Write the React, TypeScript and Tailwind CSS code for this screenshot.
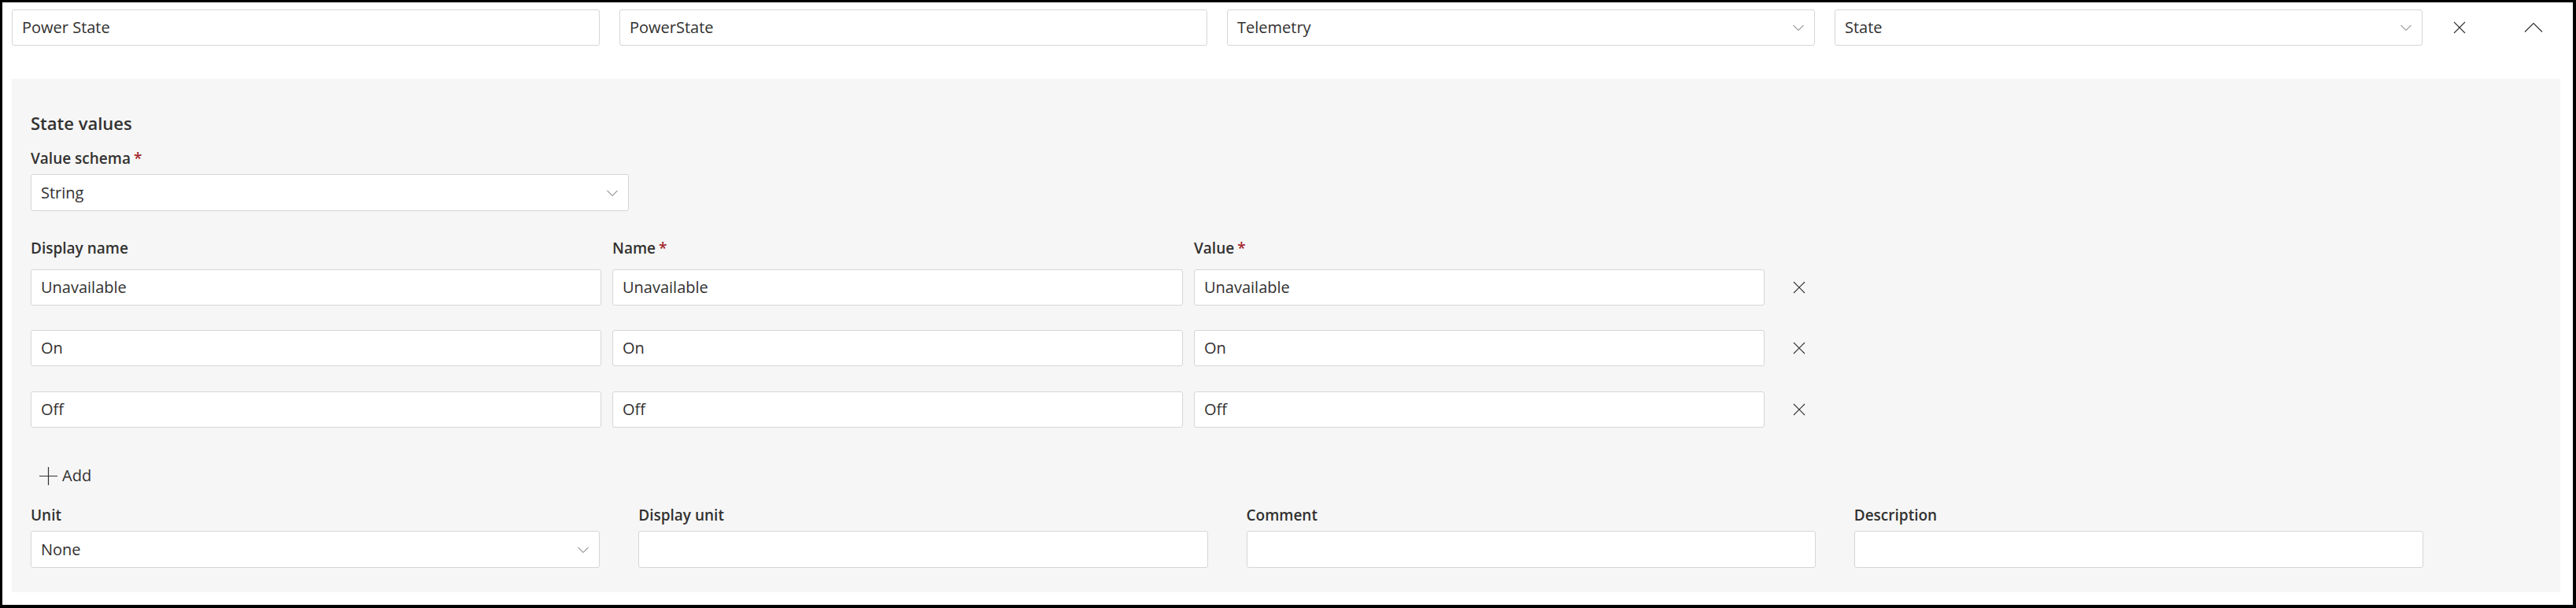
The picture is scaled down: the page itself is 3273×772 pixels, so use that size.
import React from "react";

type FieldProps = {
  value?: string;
  select?: boolean;
  className?: string;
};

function Chevron({ up }: { up?: boolean }) {
  return (
    <svg width="16" height="16" viewBox="0 0 16 16" fill="none" className="shrink-0">
      <path
        d={up ? "M1.5 11 L8 4.5 L14.5 11" : "M1.5 5 L8 11.5 L14.5 5"}
        stroke="#605e5c"
        strokeWidth="1"
      />
    </svg>
  );
}

function Cross({ size = 16 }: { size?: number }) {
  return (
    <svg width={size} height={size} viewBox="0 0 16 16" fill="none">
      <path d="M1 1 L15 15 M15 1 L1 15" stroke="#323130" strokeWidth="1.1" />
    </svg>
  );
}

function Field({ value, select, className }: FieldProps) {
  return (
    <div
      className={`flex items-center justify-between rounded-[3px] border border-[#d6d6d6] bg-white pl-3 pr-3 text-[20px] text-[#323130] ${className ?? "h-[46px]"}`}
    >
      <span className="leading-none">{value}</span>
      {select && <Chevron />}
    </div>
  );
}

function Label({ text, required }: { text: string; required?: boolean }) {
  return (
    <div className="text-[19px] font-semibold leading-[28px] text-[#323130]">
      {text}
      {required && <span className="ml-1 text-[#a4262c]">*</span>}
    </div>
  );
}

const states = [
  { v: "Unavailable", gap: "" },
  { v: "On", gap: "mt-[31px]" },
  { v: "Off", gap: "mt-[32px]" },
];

export default function App() {
  return (
    <div className="h-[772px] w-[3273px] border-b-4 border-l-[3px] border-r-4 border-t-[3px] border-black bg-white pl-3 pr-4 pt-[9px] font-['Open_Sans',sans-serif]">
      <div className="flex h-[46px] items-center">
        <div className="flex gap-[25px]">
          <Field value="Power State" className="h-[46px] w-[747px]" />
          <Field value="PowerState" className="h-[46px] w-[747px]" />
          <Field value="Telemetry" select className="h-[46px] w-[747px]" />
          <Field value="State" select className="h-[46px] w-[747px]" />
        </div>
        <button className="ml-[31px] flex h-8 w-8 items-center justify-center">
          <Cross size={16} />
        </button>
        <button className="ml-[62px] flex h-8 w-8 items-center justify-center">
          <svg width="24" height="24" viewBox="0 0 24 24" fill="none">
            <path d="M1 17.5 L12 6.5 L23 17.5" stroke="#323130" strokeWidth="1.2" />
          </svg>
        </button>
      </div>

      <div className="mt-[42px] h-[652px] bg-[#f6f6f6] pl-6 pt-[42px]">
        <div className="text-[22px] font-semibold leading-[28px] text-[#323130]">State values</div>

        <div className="mt-[17px]">
          <Label text="Value schema" required />
        </div>
        <Field value="String" select className="mt-[6px] h-[47px] w-[760px]" />

        <div className="mt-[33px] grid w-[2203px] grid-cols-3 gap-x-[14px]">
          <Label text="Display name" />
          <Label text="Name" required />
          <Label text="Value" required />
        </div>

        <div className="mt-[13px] flex flex-col">
          {states.map((s) => (
            <div key={s.v} className={`flex items-center ${s.gap}`}>
              <div className="grid w-[2203px] grid-cols-3 gap-x-[14px]">
                <Field value={s.v} />
                <Field value={s.v} />
                <Field value={s.v} />
              </div>
              <button className="ml-[28px] flex h-8 w-8 items-center justify-center">
                <Cross size={16} />
              </button>
            </div>
          ))}
        </div>

        <button className="ml-[11px] mt-[41px] flex h-10 items-center gap-[6px] text-[20px] text-[#323130]">
          <svg width="23" height="23" viewBox="0 0 23 23" fill="none">
            <path d="M11.5 0 V23 M0 11.5 H23" stroke="#323130" strokeWidth="1.2" />
          </svg>
          <span>Add</span>
        </button>

        <div className="mt-[16px] grid w-[3040px] grid-cols-4 gap-x-[49px]">
          <Label text="Unit" />
          <Label text="Display unit" />
          <Label text="Comment" />
          <Label text="Description" />
        </div>
        <div className="mt-[6px] grid w-[3040px] grid-cols-4 gap-x-[49px]">
          <Field value="None" select className="h-[47px]" />
          <Field className="h-[47px]" />
          <Field className="h-[47px]" />
          <Field className="h-[47px]" />
        </div>
      </div>
    </div>
  );
}
